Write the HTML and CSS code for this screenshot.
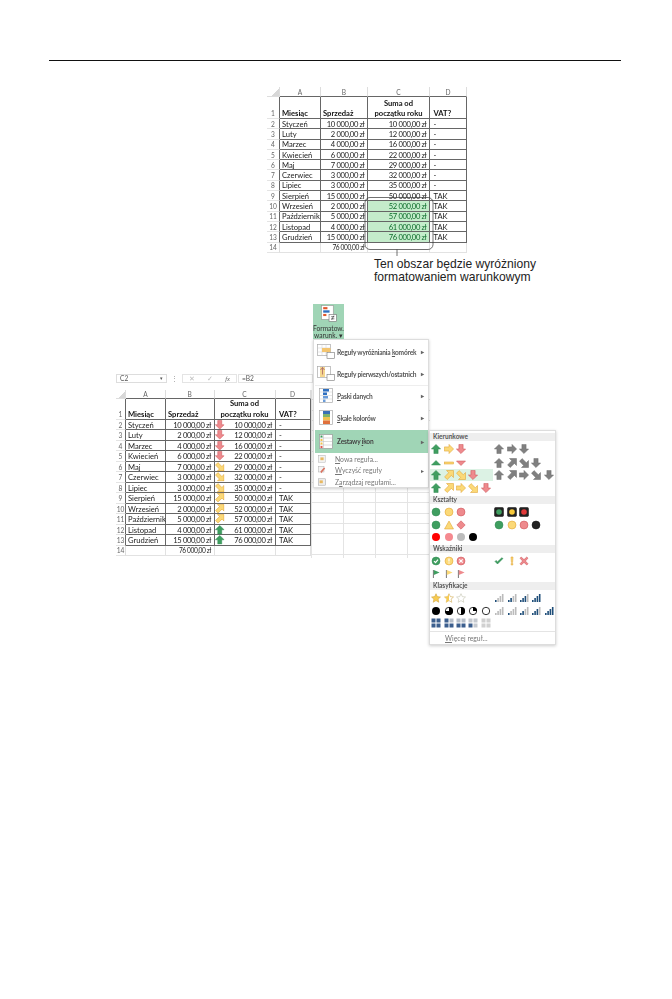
FILE: index.html
```html
<!DOCTYPE html>
<html lang="pl">
<head>
<meta charset="utf-8">
<title>Formatowanie warunkowe</title>
<link rel="stylesheet" href="styles.css">
</head>
<body>
<svg class="sprite" aria-hidden="true">
  <symbol id="arrow" viewBox="0 0 10 10"><path d="M5 .4 9.6 5H7.100v4.600H2.900V5H.4Z"/></symbol>
  <symbol id="dg" viewBox="0 0 10 10"><path d="M9.500 .5V7.500L7.400 5.400 3.200 9.500 .6 6.900 4.700 2.700 2.500 .5Z"/></symbol>
  <symbol id="tri" viewBox="0 0 10 10"><path d="M5 2.500 9.500 7H.5Z"/></symbol>
  <symbol id="dash" viewBox="0 0 10 10"><rect x=".5" y="4" width="9" height="2"/></symbol>
  <symbol id="dot" viewBox="0 0 10 10"><circle cx="5" cy="5" r="4"/></symbol>
  <symbol id="warn" viewBox="0 0 10 10"><path d="M5 1 9.500 9H.5Z"/></symbol>
  <symbol id="dia" viewBox="0 0 10 10"><path d="M5 .8 9.200 5 5 9.200 .8 5Z"/></symbol>
  <symbol id="lamp" viewBox="0 0 10 10"><rect x=".5" y=".5" width="9" height="9" rx="1.200" fill="#222" stroke="#111"/><circle cx="5" cy="5" r="2.800"/></symbol>
  <symbol id="cok" viewBox="0 0 10 10"><circle cx="5" cy="5" r="4"/><path d="M3 5.200 4.500 6.700 7 3.600" fill="none" stroke="#fff" stroke-width="1.200"/></symbol>
  <symbol id="cex" viewBox="0 0 10 10"><circle cx="5" cy="5" r="4"/><path d="M5 2.600V5.600M5 6.600V7.600" fill="none" stroke="#fff" stroke-width="1.200"/></symbol>
  <symbol id="cno" viewBox="0 0 10 10"><circle cx="5" cy="5" r="4"/><path d="M3.300 3.300 6.700 6.700M6.700 3.300 3.300 6.700" fill="none" stroke="#fff" stroke-width="1.200"/></symbol>
  <symbol id="check" viewBox="0 0 10 10"><path d="M1 5.500 3.500 8 9 2.500 7.800 1.800 3.500 5.800 2 4.400Z"/></symbol>
  <symbol id="excl" viewBox="0 0 10 10"><path d="M4 1H6L5.600 6.400H4.400ZM4.200 7.400H5.800V9H4.200Z"/></symbol>
  <symbol id="ex" viewBox="0 0 10 10"><path d="M2.200 1 5 3.600 7.800 1 9 2.200 6.400 5 9 7.800 7.800 9 5 6.400 2.200 9 1 7.800 3.600 5 1 2.200Z"/></symbol>
  <symbol id="flag" viewBox="0 0 10 10"><path d="M2.400 9V1" fill="none" stroke="#666" stroke-width=".9"/><path d="M2.800 1 8.600 3.600 2.800 6Z" stroke="none"/></symbol>
  <symbol id="star" viewBox="0 0 10 10"><path d="M5 .7 6.300 3.600 9.500 4 7.100 6.100 7.800 9.300 5 7.600 2.200 9.300 2.900 6.100 .5 4 3.700 3.600Z"/></symbol>
  <symbol id="starh" viewBox="0 0 10 10"><path d="M5 .7 6.300 3.600 9.500 4 7.100 6.100 7.800 9.300 5 7.600 2.200 9.300 2.900 6.100 .5 4 3.700 3.600Z" fill="#fff"/><path d="M5 .7V7.600L2.200 9.300 2.900 6.100 .5 4 3.700 3.600Z" stroke="none"/></symbol>
  <symbol id="p4" viewBox="0 0 10 10"><circle cx="5" cy="5" r="4" fill="#000"/></symbol>
  <symbol id="p3" viewBox="0 0 10 10"><circle cx="5" cy="5" r="3.700" fill="#fff" stroke="#000" stroke-width=".8"/><path d="M5 5V1A4 4 0 1 1 1 5Z" fill="#000"/></symbol>
  <symbol id="p2" viewBox="0 0 10 10"><circle cx="5" cy="5" r="3.700" fill="#fff" stroke="#000" stroke-width=".8"/><path d="M5 1A4 4 0 0 1 5 9Z" fill="#000"/></symbol>
  <symbol id="p1" viewBox="0 0 10 10"><circle cx="5" cy="5" r="3.700" fill="#fff" stroke="#000" stroke-width=".8"/><path d="M5 5V1A4 4 0 0 1 9 5Z" fill="#000"/></symbol>
  <symbol id="p0" viewBox="0 0 10 10"><circle cx="5" cy="5" r="3.700" fill="#fff" stroke="#000" stroke-width=".8"/></symbol>
  <symbol id="b0" viewBox="0 0 10 10"><path stroke="none" fill="#bbb" d="M1 7h1.600v2H1ZM3.300 5h1.600v4H3.300ZM5.600 3h1.600v6H5.600ZM7.900 1h1.600v8H7.900Z"/></symbol>
  <symbol id="b1" viewBox="0 0 10 10"><path stroke="none" fill="#bbb" d="M3.300 5h1.600v4H3.300ZM5.600 3h1.600v6H5.600ZM7.900 1h1.600v8H7.900Z"/><path stroke="none" fill="#1f4e79" d="M1 7h1.600v2H1Z"/></symbol>
  <symbol id="b2" viewBox="0 0 10 10"><path stroke="none" fill="#bbb" d="M5.600 3h1.600v6H5.600ZM7.900 1h1.600v8H7.900Z"/><path stroke="none" fill="#1f4e79" d="M1 7h1.600v2H1ZM3.300 5h1.600v4H3.300Z"/></symbol>
  <symbol id="b3" viewBox="0 0 10 10"><path stroke="none" fill="#bbb" d="M7.900 1h1.600v8H7.900Z"/><path stroke="none" fill="#1f4e79" d="M1 7h1.600v2H1ZM3.300 5h1.600v4H3.300ZM5.600 3h1.600v6H5.600Z"/></symbol>
  <symbol id="b4" viewBox="0 0 10 10"><path stroke="none" fill="#1f4e79" d="M1 7h1.600v2H1ZM3.300 5h1.600v4H3.300ZM5.600 3h1.600v6H5.600ZM7.900 1h1.600v8H7.900Z"/></symbol>
  <symbol id="q4" viewBox="0 0 10 10"><path fill="#3c5f8e" d="M.5 .5h4v4h-4ZM5.500 .5h4v4h-4ZM.5 5.500h4v4h-4ZM5.500 5.500h4v4h-4Z"/></symbol>
  <symbol id="q3" viewBox="0 0 10 10"><path fill="#3c5f8e" d="M.5 .5h4v4h-4ZM.5 5.500h4v4h-4ZM5.500 5.500h4v4h-4Z"/><path fill="#b5bdc8" d="M5.500 .5h4v4h-4Z"/></symbol>
  <symbol id="q2" viewBox="0 0 10 10"><path fill="#3c5f8e" d="M.5 5.500h4v4h-4ZM5.500 5.500h4v4h-4Z"/><path fill="#b5bdc8" d="M.5 .5h4v4h-4ZM5.500 .5h4v4h-4Z"/></symbol>
  <symbol id="q1" viewBox="0 0 10 10"><path fill="#3c5f8e" d="M.5 5.500h4v4h-4Z"/><path fill="#c5c9cf" d="M.5 .5h4v4h-4ZM5.500 .5h4v4h-4ZM5.500 5.500h4v4h-4Z"/></symbol>
  <symbol id="q0" viewBox="0 0 10 10"><path fill="#d0d0d0" d="M.5 .5h4v4h-4ZM5.500 .5h4v4h-4ZM.5 5.500h4v4h-4ZM5.500 5.500h4v4h-4Z"/></symbol>
</svg>

<main class="page">
  <hr class="rule">

  <section class="top">
    <div class="fig">
      <div class="grid grid-top">
        <div class="hd corner"></div><div class="hd">A</div><div class="hd">B</div><div class="hd">C</div><div class="hd">D</div>
        <div class="rh low">1</div><div class="d b low">Miesiąc</div><div class="d b low">Sprzedaż</div><div class="d b low ctr">Suma od<br>początku roku</div><div class="d b low v">VAT?</div>
        <div class="rh">2</div><div class="d">Styczeń</div><div class="d n">10 000,00 zł</div><div class="d n">10 000,00 zł</div><div class="d v">-</div>
        <div class="rh">3</div><div class="d">Luty</div><div class="d n">2 000,00 zł</div><div class="d n">12 000,00 zł</div><div class="d v">-</div>
        <div class="rh">4</div><div class="d">Marzec</div><div class="d n">4 000,00 zł</div><div class="d n">16 000,00 zł</div><div class="d v">-</div>
        <div class="rh">5</div><div class="d">Kwiecień</div><div class="d n">6 000,00 zł</div><div class="d n">22 000,00 zł</div><div class="d v">-</div>
        <div class="rh">6</div><div class="d">Maj</div><div class="d n">7 000,00 zł</div><div class="d n">29 000,00 zł</div><div class="d v">-</div>
        <div class="rh">7</div><div class="d">Czerwiec</div><div class="d n">3 000,00 zł</div><div class="d n">32 000,00 zł</div><div class="d v">-</div>
        <div class="rh">8</div><div class="d">Lipiec</div><div class="d n">3 000,00 zł</div><div class="d n">35 000,00 zł</div><div class="d v">-</div>
        <div class="rh">9</div><div class="d">Sierpień</div><div class="d n">15 000,00 zł</div><div class="d n">50 000,00 zł</div><div class="d v">TAK</div>
        <div class="rh">10</div><div class="d">Wrzesień</div><div class="d n">2 000,00 zł</div><div class="d n hit">52 000,00 zł</div><div class="d v">TAK</div>
        <div class="rh">11</div><div class="d">Październik</div><div class="d n">5 000,00 zł</div><div class="d n hit">57 000,00 zł</div><div class="d v">TAK</div>
        <div class="rh">12</div><div class="d">Listopad</div><div class="d n">4 000,00 zł</div><div class="d n hit">61 000,00 zł</div><div class="d v">TAK</div>
        <div class="rh">13</div><div class="d">Grudzień</div><div class="d n">15 000,00 zł</div><div class="d n hit">76 000,00 zł</div><div class="d v">TAK</div>
        <div class="rh lt">14</div><div class="e"></div><div class="e n tot">76 000,00 zł</div><div class="e"></div><div class="e"></div>
      </div>
      <svg class="bracket" viewBox="0 0 72 62" aria-hidden="true">
        <rect x="2" y="1.500" width="68" height="52" rx="5"/>
        <path d="M34 53.500V60"/>
      </svg>
    </div>
    <p class="caption">Ten obszar będzie wyróżniony<br>formatowaniem warunkowym</p>
  </section>

  <section class="bottom fig">
    <div class="fbar">
      <div class="namebox"><span>C2</span><span class="caret">▾</span></div>
      <span class="dots">⋮</span>
      <div class="fxbox"><span>✕</span><span>✓</span><i>fx</i></div>
      <div class="formula">=B2</div>
    </div>
    <div class="sheetrow">
      <div class="grid grid-bot">
        <div class="hd corner"></div><div class="hd">A</div><div class="hd">B</div><div class="hd">C</div><div class="hd">D</div>
        <div class="rh low">1</div><div class="d b low">Miesiąc</div><div class="d b low">Sprzedaż</div><div class="d b low ctr">Suma od<br>początku roku</div><div class="d b low v">VAT?</div>
        <div class="rh">2</div><div class="d">Styczeń</div><div class="d n">10 000,00 zł</div><div class="d n sp"><svg class="ic red s"><use href="#arrow"/></svg>10 000,00 zł</div><div class="d v">-</div>
        <div class="rh">3</div><div class="d">Luty</div><div class="d n">2 000,00 zł</div><div class="d n sp"><svg class="ic red s"><use href="#arrow"/></svg>12 000,00 zł</div><div class="d v">-</div>
        <div class="rh">4</div><div class="d">Marzec</div><div class="d n">4 000,00 zł</div><div class="d n sp"><svg class="ic red s"><use href="#arrow"/></svg>16 000,00 zł</div><div class="d v">-</div>
        <div class="rh">5</div><div class="d">Kwiecień</div><div class="d n">6 000,00 zł</div><div class="d n sp"><svg class="ic red s"><use href="#arrow"/></svg>22 000,00 zł</div><div class="d v">-</div>
        <div class="rh">6</div><div class="d">Maj</div><div class="d n">7 000,00 zł</div><div class="d n sp"><svg class="ic yel se"><use href="#dg"/></svg>29 000,00 zł</div><div class="d v">-</div>
        <div class="rh">7</div><div class="d">Czerwiec</div><div class="d n">3 000,00 zł</div><div class="d n sp"><svg class="ic yel se"><use href="#dg"/></svg>32 000,00 zł</div><div class="d v">-</div>
        <div class="rh">8</div><div class="d">Lipiec</div><div class="d n">3 000,00 zł</div><div class="d n sp"><svg class="ic yel se"><use href="#dg"/></svg>35 000,00 zł</div><div class="d v">-</div>
        <div class="rh">9</div><div class="d">Sierpień</div><div class="d n">15 000,00 zł</div><div class="d n sp"><svg class="ic yel"><use href="#dg"/></svg>50 000,00 zł</div><div class="d v">TAK</div>
        <div class="rh">10</div><div class="d">Wrzesień</div><div class="d n">2 000,00 zł</div><div class="d n sp"><svg class="ic yel"><use href="#dg"/></svg>52 000,00 zł</div><div class="d v">TAK</div>
        <div class="rh">11</div><div class="d">Październik</div><div class="d n">5 000,00 zł</div><div class="d n sp"><svg class="ic yel"><use href="#dg"/></svg>57 000,00 zł</div><div class="d v">TAK</div>
        <div class="rh">12</div><div class="d">Listopad</div><div class="d n">4 000,00 zł</div><div class="d n sp"><svg class="ic grn"><use href="#arrow"/></svg>61 000,00 zł</div><div class="d v">TAK</div>
        <div class="rh">13</div><div class="d">Grudzień</div><div class="d n">15 000,00 zł</div><div class="d n sp"><svg class="ic grn"><use href="#arrow"/></svg>76 000,00 zł</div><div class="d v">TAK</div>
        <div class="rh lt">14</div><div class="e"></div><div class="e n tot">76 000,00 zł</div><div class="e"></div><div class="e"></div>
      </div>
      <div class="blank"></div>
    </div>

    <div class="overlay">
      <div class="cfbtn">
        <svg class="cficon" viewBox="0 0 16 16" aria-hidden="true">
          <rect x="1.500" y=".5" width="11" height="13" fill="#fff" stroke="#999" stroke-width=".6"/>
          <rect x="3" y="2" width="4" height="2" fill="#e2572b"/><rect x="3" y="5" width="6" height="2.200" fill="#2e6fc0"/><rect x="3" y="8.400" width="3" height="2" fill="#e2572b"/>
          <rect x="8.500" y="9" width="7" height="6.500" fill="#fff" stroke="#777" stroke-width=".6"/><path d="M10.500 11h3M10.500 13h3M13 10 11 14" stroke="#333" stroke-width=".6"/>
        </svg>
        <span>Formatow.</span><span>warunk. ▾</span>
      </div>
      <div class="menu">
        <div class="mi">
          <svg class="mic" viewBox="0 0 18 15"><rect x=".5" y=".5" width="13" height="11" fill="#fff" stroke="#aaa" stroke-width=".7"/><path d="M.5 4h13M.5 8h13M5 .5v11M9 .5v11" stroke="#ccc" stroke-width=".5"/><rect x="5" y="4" width="8.500" height="4" fill="#f4c56f"/><rect x="10" y="8.500" width="7.500" height="6" fill="#fff" stroke="#777" stroke-width=".6"/></svg>
          <span>Reguły wyróżniania <u>k</u>omórek</span><em>▸</em>
        </div>
        <div class="mi">
          <svg class="mic" viewBox="0 0 18 15"><rect x=".5" y=".5" width="13" height="11" fill="#fff" stroke="#aaa" stroke-width=".7"/><rect x="3" y="1" width="5" height="10" fill="#f4d68f"/><path d="M5.500 1.500v7M3.500 4 5.500 1.500 7.500 4" stroke="#a66" fill="none" stroke-width=".8"/><rect x="10" y="8.500" width="7.500" height="6" fill="#fff" stroke="#777" stroke-width=".6"/></svg>
          <span>Reguły pierwszych/ostatnich</span><em>▸</em>
        </div>
        <div class="mi sep">
          <svg class="mic" viewBox="0 0 18 15"><rect x="2.500" y=".5" width="13" height="14" fill="#fff" stroke="#aaa" stroke-width=".7"/><path d="M2.500 4h13M2.500 7.500h13M2.500 11h13" stroke="#ccc" stroke-width=".5"/><rect x="6" y="1" width="6" height="2.500" fill="#2e6fc0"/><rect x="6" y="4.500" width="4" height="2.500" fill="#2e6fc0"/><rect x="6" y="8" width="5" height="2.500" fill="#6a9bd8"/><rect x="6" y="11.500" width="2.500" height="2.500" fill="#6a9bd8"/></svg>
          <span><u>P</u>aski danych</span><em>▸</em>
        </div>
        <div class="mi">
          <svg class="mic" viewBox="0 0 18 15"><rect x="2.500" y=".5" width="13" height="14" fill="#fff" stroke="#aaa" stroke-width=".7"/><rect x="6" y="1" width="7" height="3" fill="#3a6fb5"/><rect x="6" y="4" width="7" height="3" fill="#7fb26a"/><rect x="6" y="7" width="7" height="3.500" fill="#f0c24e"/><rect x="6" y="10.500" width="7" height="3.500" fill="#e0703c"/></svg>
          <span><u>S</u>kale kolorów</span><em>▸</em>
        </div>
        <div class="mi on">
          <svg class="mic" viewBox="0 0 18 15"><rect x="2.500" y=".5" width="13" height="14" fill="#fff" stroke="#999" stroke-width=".7"/><path d="M2.500 4h13M2.500 7.500h13M2.500 11h13M6.500 .5v14" stroke="#bbb" stroke-width=".5"/><path d="M3.500 1.500h2v2h-2Z" fill="#3a9a5b"/><path d="M3.500 5h2v2h-2ZM3.500 8.500h2v2h-2Z" fill="#f0c24e"/><path d="M3.500 12h2v2h-2Z" fill="#e0574f"/></svg>
          <span>Zestawy <u>i</u>kon</span><em>▸</em>
        </div>
        <div class="ms">
          <svg class="msic" viewBox="0 0 10 10"><rect x=".5" y=".5" width="8.500" height="8.500" fill="#f4f4f4" stroke="#aaa" stroke-width=".6"/><rect x="3" y="3" width="4" height="3.500" fill="#e8b860"/></svg>
          <span><u>N</u>owa reguła...</span>
        </div>
        <div class="ms">
          <svg class="msic" viewBox="0 0 10 10"><rect x=".5" y=".5" width="7" height="7" fill="#f4f4f4" stroke="#aaa" stroke-width=".6"/><path d="M4 9 9 3 7.500 2 3 7Z" fill="#d9705e"/></svg>
          <span><u>W</u>yczyść reguły</span><em>▸</em>
        </div>
        <div class="ms">
          <svg class="msic" viewBox="0 0 10 10"><rect x=".5" y="1" width="9" height="8" fill="#eee" stroke="#999" stroke-width=".6"/><rect x="2" y="3" width="4" height="3.500" fill="#e8b860"/></svg>
          <span>Z<u>a</u>rządzaj regułami...</span>
        </div>
      </div>

      <div class="sub">
        <div class="sh">Kierunkowe</div>
        <div class="ir">
          <div class="ig"><svg class="ic grn"><use href="#arrow"/></svg><svg class="ic yel ea"><use href="#arrow"/></svg><svg class="ic red s"><use href="#arrow"/></svg></div>
          <div class="ig"><svg class="ic gry"><use href="#arrow"/></svg><svg class="ic gry ea"><use href="#arrow"/></svg><svg class="ic gry s"><use href="#arrow"/></svg></div>
        </div>
        <div class="ir gap2">
          <div class="ig"><svg class="ic grn"><use href="#tri"/></svg><svg class="ic yel"><use href="#dash"/></svg><svg class="ic red s"><use href="#tri"/></svg></div>
          <div class="ig"><svg class="ic gry"><use href="#arrow"/></svg><svg class="ic gry"><use href="#dg"/></svg><svg class="ic gry se"><use href="#dg"/></svg><svg class="ic gry s"><use href="#arrow"/></svg></div>
        </div>
        <div class="ir">
          <div class="ig hl"><svg class="ic grn"><use href="#arrow"/></svg><svg class="ic yel"><use href="#dg"/></svg><svg class="ic yel se"><use href="#dg"/></svg><svg class="ic red s"><use href="#arrow"/></svg></div>
          <div class="ig"><svg class="ic gry"><use href="#arrow"/></svg><svg class="ic gry"><use href="#dg"/></svg><svg class="ic gry ea"><use href="#arrow"/></svg><svg class="ic gry se"><use href="#dg"/></svg><svg class="ic gry s"><use href="#arrow"/></svg></div>
        </div>
        <div class="ir">
          <div class="ig"><svg class="ic grn"><use href="#arrow"/></svg><svg class="ic yel"><use href="#dg"/></svg><svg class="ic yel ea"><use href="#arrow"/></svg><svg class="ic yel se"><use href="#dg"/></svg><svg class="ic red s"><use href="#arrow"/></svg></div>
        </div>

        <div class="sh">Kształty</div>
        <div class="ir">
          <div class="ig"><svg class="ic grn"><use href="#dot"/></svg><svg class="ic yel"><use href="#dot"/></svg><svg class="ic red"><use href="#dot"/></svg></div>
          <div class="ig"><svg class="ic lg"><use href="#lamp"/></svg><svg class="ic ly"><use href="#lamp"/></svg><svg class="ic lr"><use href="#lamp"/></svg></div>
        </div>
        <div class="ir">
          <div class="ig"><svg class="ic grn"><use href="#dot"/></svg><svg class="ic yel"><use href="#warn"/></svg><svg class="ic red"><use href="#dia"/></svg></div>
          <div class="ig"><svg class="ic grn"><use href="#dot"/></svg><svg class="ic yel"><use href="#dot"/></svg><svg class="ic red"><use href="#dot"/></svg><svg class="ic blk"><use href="#dot"/></svg></div>
        </div>
        <div class="ir">
          <div class="ig"><svg class="ic fr"><use href="#dot"/></svg><svg class="ic fp"><use href="#dot"/></svg><svg class="ic fg"><use href="#dot"/></svg><svg class="ic fk"><use href="#dot"/></svg></div>
        </div>

        <div class="sh">Wskaźniki</div>
        <div class="ir">
          <div class="ig"><svg class="ic grn"><use href="#cok"/></svg><svg class="ic yel"><use href="#cex"/></svg><svg class="ic red"><use href="#cno"/></svg></div>
          <div class="ig"><svg class="ic grn"><use href="#check"/></svg><svg class="ic yel"><use href="#excl"/></svg><svg class="ic red"><use href="#ex"/></svg></div>
        </div>
        <div class="ir">
          <div class="ig"><svg class="ic grn"><use href="#flag"/></svg><svg class="ic yel"><use href="#flag"/></svg><svg class="ic red"><use href="#flag"/></svg></div>
        </div>

        <div class="sh">Klasyfikacje</div>
        <div class="ir">
          <div class="ig"><svg class="ic st"><use href="#star"/></svg><svg class="ic st"><use href="#starh"/></svg><svg class="ic st0"><use href="#star"/></svg></div>
          <div class="ig"><svg class="ic"><use href="#b1"/></svg><svg class="ic"><use href="#b2"/></svg><svg class="ic"><use href="#b3"/></svg><svg class="ic"><use href="#b4"/></svg></div>
        </div>
        <div class="ir">
          <div class="ig"><svg class="ic"><use href="#p4"/></svg><svg class="ic"><use href="#p3"/></svg><svg class="ic"><use href="#p2"/></svg><svg class="ic"><use href="#p1"/></svg><svg class="ic"><use href="#p0"/></svg></div>
          <div class="ig"><svg class="ic"><use href="#b0"/></svg><svg class="ic"><use href="#b1"/></svg><svg class="ic"><use href="#b2"/></svg><svg class="ic"><use href="#b3"/></svg><svg class="ic"><use href="#b4"/></svg></div>
        </div>
        <div class="ir">
          <div class="ig"><svg class="ic"><use href="#q4"/></svg><svg class="ic"><use href="#q3"/></svg><svg class="ic"><use href="#q2"/></svg><svg class="ic"><use href="#q1"/></svg><svg class="ic"><use href="#q0"/></svg></div>
        </div>
        <div class="more"><span><u>W</u>ięcej reguł...</span></div>
      </div>
    </div>
  </section>
</main>
</body>
</html>
```

FILE: styles.css
```css
* { box-sizing: border-box; }
html, body { margin: 0; background: #fff; }
body { font-family: Lato, "Open Sans", sans-serif; color: #222; }
.sprite { width: 0; height: 0; position: absolute; }
.page { width: 672px; height: 999px; padding-top: 60px; overflow: hidden; }
.rule { margin: 0 0 0 49px; width: 572px; height: 1px; border: 0; background: #111; }

.fig { filter: blur(.35px); }
.top { margin-top: 26px; }
.top .fig { position: relative; width: 200px; margin-left: 267px; }

.grid { display: grid; font-size: 7.600px; }
.grid-top {
  grid-template-columns: 13px 41px 47px 62px 37px;
  grid-template-rows: 10px 22px repeat(12, 10.3px) 10.3px;
}
.grid-bot {
  grid-template-columns: 10px 40px 48.5px 61px 35px;
  grid-template-rows: 9px 21px repeat(12, 10.5px) 10px;
}
.grid > div { display: flex; align-items: center; white-space: nowrap; }
.hd { justify-content: center; color: #666; font-size: 6.600px; border-right: 1px solid #ddd; border-bottom: 1px solid #666; }
.hd.corner { background: linear-gradient(135deg, #fff 62%, #d8d8d8 62%); border-bottom-color: #ddd; border-right-color: #ddd; }
.rh { justify-content: center; color: #666; font-size: 6.600px; border-right: 1px solid #666; border-bottom: 1px solid #e4e4e4; }
.rh.lt { border-right-color: #ddd; }
.d { padding-left: 2px; border-right: 1px solid #666; border-bottom: 1px solid #666; }
.e { padding-left: 2px; border-right: 1px solid #e2e2e2; border-bottom: 1px solid #e2e2e2; }
.grid > .n { justify-content: flex-end; padding-right: 2.500px; letter-spacing: -.38px; }
.grid > .sp { justify-content: space-between; padding-left: .5px; }
.grid > .low { align-items: flex-end; line-height: 10.200px; }
.grid > .ctr { justify-content: center; text-align: center; padding-left: 0; }
.grid > .v { padding-left: 3.500px; }
.b { font-weight: 700; color: #111; }
.tot { font-size: 6.600px; }
.grid > .hit { background: #c4eccb; color: #0c6b2a; }

.bracket { position: absolute; left: 96px; top: 109px; width: 72px; height: 62px; overflow: visible; }
.bracket rect, .bracket path { fill: none; stroke: #333; stroke-width: .7; }
.caption { margin: 5px 0 0 374px; font: 12.100px/13px "Liberation Sans", Arial, sans-serif; color: #222; }

.bottom { position: relative; height: 360px; margin-top: 20px; padding: 70px 0 0 116px; }
.fbar { display: flex; align-items: center; width: 197px; height: 9px; font-size: 6.600px; color: #555; }
.namebox { width: 51px; height: 9px; border: 1px solid #ddd; display: flex; justify-content: space-between; align-items: center; padding: 0 3px; }
.caret { font-size: 5px; }
.dots { width: 15px; text-align: center; color: #999; }
.fxbox { width: 55px; height: 9px; border: 1px solid #e4e4e4; display: flex; justify-content: space-around; align-items: center; color: #bbb; }
.fxbox i { color: #666; font-family: "Liberation Serif", serif; }
.formula { flex: 1; height: 9px; border: 1px solid #e4e4e4; padding-left: 3px; line-height: 7px; margin-left: 1px; }
.sheetrow { display: flex; margin-top: 7px; }
.blank {
  width: 119px; height: 168px;
  background:
    repeating-linear-gradient(90deg, #e4e4e4 0 1px, transparent 1px 32px) 0 0,
    repeating-linear-gradient(180deg, transparent 0 9.300px, #e4e4e4 9.300px 10.300px) 0 0;
}

.overlay { position: absolute; left: 313px; top: 0; }
.cfbtn {
  width: 31px; height: 35px; background: #a0d5b6; display: flex; flex-direction: column; align-items: center;
  font-size: 6.600px; line-height: 7.500px; color: #333; padding-top: 1px; white-space: nowrap;
}
.cficon { width: 17px; height: 17px; margin-bottom: 3px; flex: none; }
.menu { position: absolute; left: 0; top: 35px; width: 116px; height: 149px; padding: 1px 0 0 1px; background: #fff; border: 1px solid #ddd; box-shadow: 0 1px 3px rgba(0,0,0,.2); }
.mi { position: relative; display: flex; align-items: center; height: 22px; padding-left: 2px; font-size: 6.600px; letter-spacing: -.2px; font-weight: 700; color: #555; white-space: nowrap; }
.mi.sep { box-shadow: inset 0 1px 0 #eee; }
.mi.on { background: #a0d5b6; color: #444; margin-top: 1px; height: 23px; }
.mic { width: 18px; height: 15px; margin-right: 2px; flex: none; }
.mi em, .ms em { position: absolute; right: 4px; font-style: normal; font-size: 6px; color: #666; }
.ms { position: relative; display: flex; align-items: center; height: 11.600px; padding-left: 3px; font-size: 6.800px; color: #777; white-space: nowrap; }
.msic { width: 8px; height: 8px; margin-right: 9px; flex: none; }

.sub { position: absolute; left: 116px; top: 126px; width: 127px; height: 215px; padding-top: 2px; background: #fff; border: 1px solid #ddd; box-shadow: 0 1px 3px rgba(0,0,0,.2); }
.sh { height: 8px; margin: 0 0 2px; padding-left: 3px; background: #eee; font-size: 6.500px; line-height: 8px; font-weight: 700; color: #555; }
.ir { display: flex; height: 12.300px; margin-bottom: .2px; }
.ir.gap2 { margin-top: 1.500px; }
.ig { display: flex; align-items: center; width: 63px; flex: none; }
.ig.hl { background: #dcf2e4; }
.ir + .sh { margin-top: 2px; }
.ic { width: 10px; height: 10px; margin: 0 1.200px; flex: none; stroke-width: .5; overflow: visible; }
.grid .ic { width: 9.500px; height: 9.500px; margin: 0; }
.grn { fill: #3f9e60; stroke: #2f8850; }
.yel { fill: #fbd978; stroke: #dd9a24; }
.red { fill: #ee8a8d; stroke: #c8484e; }
.gry { fill: #808080; stroke: #6c6c6c; }
.blk { fill: #222; stroke: #111; }
.lg { fill: #3f9e60; stroke: none; }
.ly { fill: #f7c93a; stroke: none; }
.lr { fill: #e23a3a; stroke: none; }
.fr { fill: #ff0000; stroke: none; }
.fp { fill: #f58a90; stroke: none; }
.fg { fill: #bcbcbc; stroke: none; }
.fk { fill: #000; stroke: none; }
.st { fill: #f7cb52; stroke: #c99a2e; }
.st0 { fill: #fff; stroke: #b8b8a0; }
.ea { transform: rotate(90deg); }
.s { transform: rotate(180deg); }
.se { transform: rotate(90deg); }
.more { margin-top: 2px; border-top: 1px solid #e4e4e4; padding: 1px 0 0 15px; font-size: 6.800px; line-height: 11px; color: #777; }
```
